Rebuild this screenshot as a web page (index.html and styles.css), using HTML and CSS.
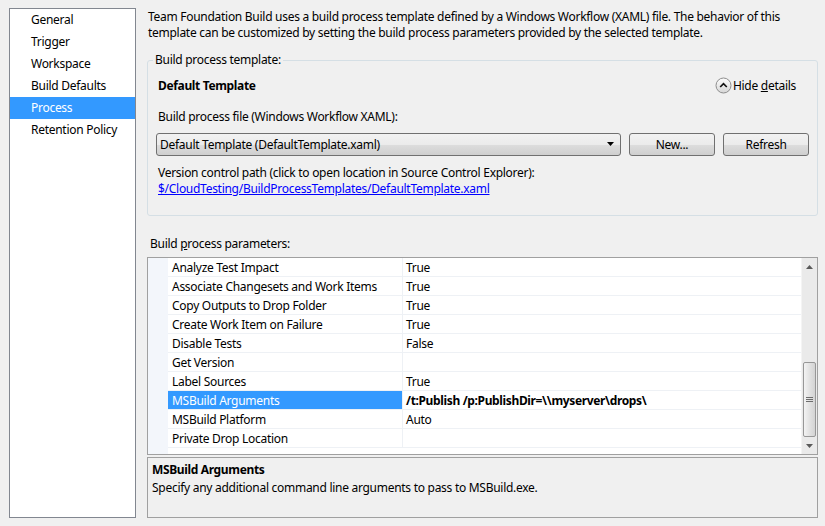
FILE: index.html
```html
<!DOCTYPE html>
<html>
<head>
<meta charset="utf-8">
<link rel="stylesheet" href="styles.css">
</head>
<body>
<div class="window">
  <ul class="nav">
    <li>General</li>
    <li>Trigger</li>
    <li>Workspace</li>
    <li>Build Defaults</li>
    <li class="selected">Process</li>
    <li>Retention Policy</li>
  </ul>
  <div class="main">
    <p class="intro">Team Foundation Build uses a build process template defined by a Windows Workflow (XAML) file. The behavior of this<br>template can be customized by setting the build process parameters provided by the selected template.</p>
    <fieldset class="group">
      <legend>Build process template:</legend>
      <div class="tpl-head">
        <span class="tpl-name">Default Template</span>
        <span class="toggle">
          <svg class="toggle-icon" width="17" height="17" viewBox="0 0 17 17">
            <defs>
              <linearGradient id="tg" x1="0" y1="0" x2="0" y2="1">
                <stop offset="0" stop-color="#fdfdfd"/>
                <stop offset="1" stop-color="#d6d6d6"/>
              </linearGradient>
            </defs>
            <circle cx="8.5" cy="8.5" r="7.5" fill="url(#tg)" stroke="#8d8d8d"/>
            <path d="M5.2 10 L8.5 6.7 L11.8 10" fill="none" stroke="#111" stroke-width="1.7"/>
          </svg>
          <span>Hide <u>d</u>etails</span>
        </span>
      </div>
      <div class="label">Build process file (Windows Workflow XAML):</div>
      <div class="file-row">
        <div class="combo">
          <span>Default Template (DefaultTemplate.xaml)</span>
          <svg width="8" height="5" viewBox="0 0 8 5"><path d="M0 0 H7 L3.5 4 Z" fill="#000"/></svg>
        </div>
        <button class="btn">New...</button>
        <button class="btn">Refresh</button>
      </div>
      <div class="label vc">Version control path (click to open location in Source Control Explorer):</div>
      <a class="link" href="#">$/CloudTesting/BuildProcessTemplates/DefaultTemplate.xaml</a>
    </fieldset>
    <div class="params-label">Build <u>p</u>rocess parameters:</div>
    <div class="grid">
      <div class="rows">
        <div class="row"><div class="name">Analyze Test Impact</div><div class="val">True</div></div>
        <div class="row"><div class="name">Associate Changesets and Work Items</div><div class="val">True</div></div>
        <div class="row"><div class="name">Copy Outputs to Drop Folder</div><div class="val">True</div></div>
        <div class="row"><div class="name">Create Work Item on Failure</div><div class="val">True</div></div>
        <div class="row"><div class="name">Disable Tests</div><div class="val">False</div></div>
        <div class="row"><div class="name">Get Version</div><div class="val"></div></div>
        <div class="row"><div class="name">Label Sources</div><div class="val">True</div></div>
        <div class="row selected"><div class="name">MSBuild Arguments</div><div class="val">/t:Publish /p:PublishDir=\\myserver\drops\</div></div>
        <div class="row"><div class="name">MSBuild Platform</div><div class="val">Auto</div></div>
        <div class="row"><div class="name">Private Drop Location</div><div class="val"></div></div>
      </div>
      <div class="scrollbar">
        <div class="sb-arrow">
          <svg width="7" height="4" viewBox="0 0 7 4"><path d="M3.5 0 L7 4 H0 Z" fill="#5a5a5a"/></svg>
        </div>
        <div class="sb-space"></div>
        <div class="sb-thumb">
          <svg width="7" height="5" viewBox="0 0 7 5"><path d="M0 0.5 H7 M0 2.5 H7 M0 4.5 H7" stroke="#6c6c6c" stroke-width="1"/></svg>
        </div>
        <div class="sb-arrow">
          <svg width="7" height="4" viewBox="0 0 7 4"><path d="M0 0 H7 L3.5 4 Z" fill="#5a5a5a"/></svg>
        </div>
      </div>
    </div>
    <div class="desc">
      <div class="desc-title">MSBuild Arguments</div>
      <div class="desc-text">Specify any additional command line arguments to pass to MSBuild.exe.</div>
    </div>
  </div>
</div>
</body>
</html>
```
FILE: styles.css
```css
* { box-sizing: border-box; }
html, body {
  margin: 0;
  background: #f0f0f0;
}
body {
  font-family: "Noto Sans", "Open Sans", sans-serif;
  font-size: 12px;
  line-height: 16px;
  letter-spacing: -0.28px;
  color: #000;
}
.tpl-name, .desc-title, .row.selected .val {
  letter-spacing: -0.35px;
}
.window {
  display: flex;
  padding: 8px 7px 8px 9px;
  height: 526px;
}
.nav {
  list-style: none;
  margin: 0;
  padding: 0;
  width: 127px;
  height: 510px;
  background: #fff;
  border: 1px solid #828790;
}
.nav li {
  height: 22px;
  line-height: 22px;
  padding-left: 21px;
  white-space: nowrap;
}
.nav li.selected {
  background: #3399ff;
  color: #fff;
}
.main {
  flex: 1;
  margin-left: 11px;
  display: flex;
  flex-direction: column;
}
.intro {
  margin: 1px 0 0 1px;
  white-space: nowrap;
}
.group {
  margin: 11px 0 0 0;
  padding: 0 8px 18px 8px;
  border: 1px solid #d5dfe5;
  border-radius: 3px;
  min-width: 0;
}
.group legend {
  padding: 0 2px;
  margin-left: -3px;
  line-height: 16px;
}
.tpl-head {
  display: flex;
  justify-content: space-between;
  align-items: center;
  margin-top: 9px;
  padding-left: 2px;
  padding-right: 13px;
}
.tpl-name { font-weight: bold; }
.toggle {
  display: flex;
  align-items: center;
  gap: 1px;
}
.toggle-icon { display: block; }
.label {
  padding-left: 2px;
  margin-top: 15px;
  white-space: nowrap;
}
.file-row {
  display: flex;
  gap: 8px;
  margin-top: 8px;
  height: 23px;
}
.combo {
  flex: 1;
  display: flex;
  align-items: center;
  justify-content: space-between;
  padding: 0 5px 0 3px;
  border: 1px solid #707070;
  border-radius: 3px;
  background: linear-gradient(#f2f2f2 0%, #ebebeb 50%, #dddddd 51%, #cfcfcf 100%);
}
.btn {
  width: 86px;
  font: inherit;
  letter-spacing: inherit;
  color: #000;
  border: 1px solid #707070;
  border-radius: 3px;
  background: linear-gradient(#f2f2f2 0%, #ebebeb 50%, #dddddd 51%, #cfcfcf 100%);
  padding: 0;
}
.label.vc { margin-top: 9px; }
.link {
  display: block;
  padding-left: 2px;
  color: #0000ff;
  text-decoration: underline;
  white-space: nowrap;
  align-self: flex-start;
}
.params-label {
  margin-top: 20px;
  padding-left: 3px;
}
.grid {
  margin-top: 5px;
  height: 198px;
  border: 1px solid #a0a0a0;
  display: flex;
  background: #fff;
}
.rows {
  flex: 1;
  padding-left: 20px;
  background: linear-gradient(to right, #f3f6fb 20px, #ffffff 20px);
}
.row {
  display: grid;
  grid-template-columns: 234px 1fr;
  height: 19px;
  line-height: 16px;
  background: #fff;
}
.row .name {
  padding: 2px 0 0 4px;
  border-bottom: 1px solid #eef1f5;
  white-space: nowrap;
}
.row .val {
  padding: 2px 0 0 3px;
  border-left: 1px solid #eef1f5;
  border-bottom: 1px solid #eef1f5;
  white-space: nowrap;
}
.row.selected .name {
  background: #3399ff;
  color: #fff;
}
.row.selected .val { font-weight: bold; }
.scrollbar {
  width: 16px;
  display: flex;
  flex-direction: column;
  background: #eaeaea;
  border-left: 1px solid #f4f4f4;
}
.sb-arrow {
  height: 17px;
  display: flex;
  align-items: center;
  justify-content: center;
}
.sb-space { flex: 1; }
.sb-thumb {
  height: 75px;
  margin: 0 1px;
  border: 1px solid #979797;
  border-radius: 2px;
  background: linear-gradient(to right, #f3f3f3, #e2e2e2 50%, #d3d3d3);
  display: flex;
  align-items: center;
  justify-content: center;
}
.sb-thumb svg { display: block; }
.desc {
  margin-top: 2px;
  height: 61px;
  border: 1px solid #a0a0a0;
  padding: 3px 4px;
}
.desc-title {
  font-weight: bold;
  line-height: 17px;
}
.desc-text {
  margin-top: 2px;
}
```
